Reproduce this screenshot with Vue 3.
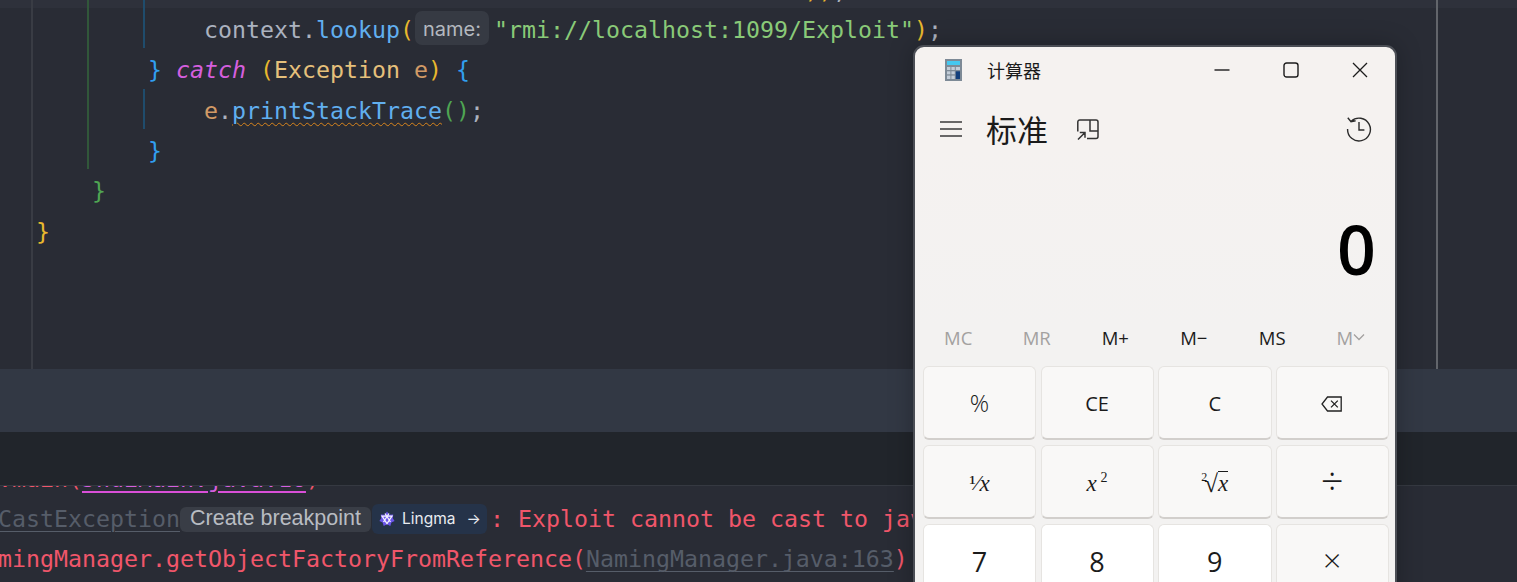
<script setup>
const memory = [
  { label: 'MC', off: true },
  { label: 'MR', off: true },
  { label: 'M+', off: false },
  { label: 'M−', off: false },
  { label: 'MS', off: false },
]
</script>

<template>
  <div class="page">
    <section class="editor">
      <i class="guide g-root"></i>
      <i class="guide g-green"></i>
      <i class="guide g-blue-a"></i>
      <i class="guide g-blue-b"></i>
      <i class="guide g-margin"></i>

      <div class="strip"><div class="strip-line"><span class="yellow">))</span><span class="plain">;</span></div></div>

      <div class="line lv3"><span class="plain">context.</span><span class="fn">lookup</span><span class="yellow">(</span><span class="hint">name:</span><span class="str">"rmi://localhost:1099/Exploit"</span><span class="yellow">)</span><span class="plain">;</span></div>
      <div class="line lv2"><span class="blue">}</span> <span class="kw">catch</span> <span class="yellow">(</span><span class="type">Exception</span> <span class="param">e</span><span class="yellow">)</span> <span class="blue">{</span></div>
      <div class="line lv3"><span class="param">e</span><span class="plain">.</span><span class="fn warn">printStackTrace</span><span class="green">()</span><span class="plain">;</span></div>
      <div class="line lv2"><span class="blue">}</span></div>
      <div class="line lv1"><span class="green">}</span></div>
      <div class="line lv0"><span class="yellow">}</span></div>
    </section>

    <div class="band"></div>
    <div class="toolbar"></div>

    <section class="console">
      <div class="cline clipped"><span>.main(</span><span class="hot">JndiMain.java:16</span><span>)</span></div>
      <div class="cline"><span class="link">CastException</span><span class="chip">Create breakpoint</span><span class="lingma"><svg class="lingma-logo" viewBox="0 0 16 16" width="16" height="16"><path d="M8 .5l2.2 3.2 4-.3-.4 3.9L15.6 10l-3.2 1.4L11.3 15 8 13.2 4.7 15l-1.100-3.600L.4 10l1.800-2.700-.4-3.900 4 .3z" fill="#6a55ea"/><path d="M3 5h10L8 12.500zM6 2.500l5.500 8.500M10 2.500 4.500 11" fill="none" stroke="#f4f2ff" stroke-width="1.250"/></svg><span class="lingma-name">Lingma</span><span class="lingma-arrow">→</span></span><span class="after">: Exploit cannot be cast to java.lang.Runnable</span></div>
      <div class="cline"><span>mingManager.getObjectFactoryFromReference(</span><span class="link">NamingManager.java:163</span><span>)</span></div>
    </section>

    <aside class="calc">
      <header class="titlebar">
        <svg class="app-icon" viewBox="0 0 18 22" width="18" height="22">
          <rect width="17" height="22" fill="#7d8a96"/>
          <rect x="2" y="2" width="13" height="4" fill="#45c8f0"/>
          <g fill="#c3cdd8">
            <rect x="2" y="8" width="3.4" height="3"/><rect x="6.4" y="8" width="3.4" height="3"/><rect x="10.8" y="8" width="4.2" height="3"/>
            <rect x="2" y="12.3" width="3.4" height="3"/><rect x="6.4" y="12.3" width="3.4" height="3"/>
            <rect x="2" y="16.6" width="3.4" height="3.4"/><rect x="6.4" y="16.6" width="3.4" height="3.4"/>
          </g>
          <rect x="10.8" y="12.3" width="4.2" height="7.7" fill="#123f7c"/>
        </svg>
        <span class="app-name">计算器</span>
        <div class="controls">
          <span class="ctl"><svg viewBox="0 0 16 16" width="16" height="16"><path d="M0.5 8h15" stroke="#1c1c1c" stroke-width="1.4"/></svg></span>
          <span class="ctl"><svg viewBox="0 0 16 16" width="16" height="16"><rect x="1" y="1" width="14" height="14" rx="2.6" fill="none" stroke="#1c1c1c" stroke-width="1.4"/></svg></span>
          <span class="ctl"><svg viewBox="0 0 16 16" width="16" height="16"><path d="M1 1l14 14M15 1 1 15" stroke="#1c1c1c" stroke-width="1.3"/></svg></span>
        </div>
      </header>

      <div class="modebar">
        <svg class="ham" viewBox="0 0 22 16" width="22" height="16"><path d="M0 1h22M0 8h22M0 15h22" stroke="#3a3a3a" stroke-width="1.5"/></svg>
        <span class="mode">标准</span>
        <svg class="keep" viewBox="0 0 22 22" width="22" height="22"><path d="M0.8 12.500V3a2 2 0 0 1 2-2h16.200a2 2 0 0 1 2 2v14.500a2 2 0 0 1-2 2H10M13 1v11h8M1 20.500l7-7M2.800 13.500H8v5.200" fill="none" stroke="#333" stroke-width="1.500"/></svg>
        <svg class="history" viewBox="0 0 26 26" width="26" height="26"><path d="M5.2 5.2A11.4 11.4 0 1 1 1.6 13M1.8 1.8 5 5.8l4.6-1M13 6v8h5.4" fill="none" stroke="#2b2b2b" stroke-width="1.4"/></svg>
      </div>

      <div class="display">0</div>

      <div class="memory">
        <span v-for="m in memory" :key="m.label" class="mem" :class="{ off: m.off }">{{ m.label }}</span>
        <span class="mem off">M<svg viewBox="0 0 12 8" width="12" height="8"><path d="M1 1.500 6 6.500l5-5" fill="none" stroke="#a3a1a0" stroke-width="1.300"/></svg></span>
      </div>

      <div class="keys">
        <button class="key big">%</button>
        <button class="key">CE</button>
        <button class="key">C</button>
        <button class="key"><svg viewBox="0 0 22 16" width="22" height="16"><path d="M6.5 1H20.2V15H6.5L1 8zM10 4.600l6.800 6.800M16.800 4.600 10 11.400" fill="none" stroke="#222" stroke-width="1.300"/></svg></button>

        <button class="key math"><span class="frac">¹⁄</span><i>x</i></button>
        <button class="key math"><i>x</i><sup class="sq">2</sup></button>
        <button class="key math"><sup class="root">2</sup><span class="radical">√</span><i class="over">x</i></button>
        <button class="key op div">÷</button>

        <button class="key digit">7</button>
        <button class="key digit">8</button>
        <button class="key digit">9</button>
        <button class="key op">×</button>
      </div>
    </aside>
  </div>
</template>

<style scoped>
.page {
  position: relative;
  width: 1517px;
  height: 582px;
  overflow: hidden;
  display: flex;
  flex-direction: column;
  background: #292c35;
  font-family: "DejaVu Sans Mono", "Liberation Mono", monospace;
  font-size: 23.25px;
}

.editor {
  position: relative;
  height: 369px;
  flex: none;
  overflow: hidden;
}
.strip {
  height: 8px;
  overflow: hidden;
  background: #2e313b;
}
.strip-line {
  margin-top: -29px;
  padding-left: 805px;
  line-height: 40.33px;
}
.line {
  box-sizing: border-box;
  height: 40.33px;
  padding-top: 2px;
  line-height: 40.33px;
  white-space: pre;
}
.lv0 { padding-left: 36px; }
.lv1 { padding-left: 92px; }
.lv2 { padding-left: 148px; }
.lv3 { padding-left: 204px; }

.guide {
  position: absolute;
  width: 2px;
  top: 0;
}
.g-root { left: 31px; height: 369px; background: #393c44; }
.g-green { left: 87px; height: 169px; background: #31573a; }
.g-blue-a { left: 143px; height: 48px; background: #1f4c6c; }
.g-blue-b { left: 143px; top: 89px; height: 40px; background: #1f4c6c; }
.g-margin { left: 1436px; height: 369px; background: #62656b; }

.plain { color: #abb2bf; }
.fn { color: #61afef; }
.yellow { color: #e8b82e; }
.blue { color: #319ff0; }
.green { color: #4fa553; }
.kw { color: #d55fde; font-style: italic; }
.type { color: #e5c07b; }
.param { color: #d19a66; }
.str { color: #89ca78; }
.warn {
  text-decoration: underline wavy #d9851c 1.1px;
  text-underline-offset: 3px;
}
.hint {
  display: inline-block;
  width: 74px;
  height: 34px;
  margin: 1px 5px 0 1px;
  vertical-align: top;
  border-radius: 7px;
  background: #363a43;
  color: #b4b8bf;
  font-family: "Inter", "Liberation Sans", sans-serif;
  font-size: 20px;
  line-height: 36px;
  text-align: center;
}

.band { height: 63px; flex: none; background: #323844; }
.toolbar { height: 53px; flex: none; background: #21252b; border-bottom: 1px solid #353941; }

.console {
  flex: 1;
  overflow: hidden;
  color: #f0566a;
  margin-left: -2px;
}
.cline {
  display: flex;
  align-items: center;
  height: 40.33px;
  line-height: 40.33px;
  white-space: pre;
}
.clipped { margin-top: -27.3px; }
.hot {
  color: #d55fde;
  text-decoration: underline;
  text-decoration-color: #d94fd8;
  text-underline-offset: 4px;
}
.link {
  color: #565d69;
  text-decoration: underline;
  text-decoration-thickness: 1px;
  text-underline-offset: 4px;
}
.chip {
  width: 191px;
  height: 25px;
  line-height: 22px;
  border-radius: 6px;
  background: #393d46;
  color: #b8bcc2;
  font-family: "Liberation Sans", Arial, sans-serif;
  font-size: 21.5px;
  text-align: center;
}
.lingma {
  display: flex;
  align-items: center;
  width: 115px;
  height: 30px;
  margin-left: 1px;
  margin-right: 3px;
  padding-left: 7px;
  box-sizing: border-box;
  border-radius: 6px;
  background: #253349;
  color: #e8ebf0;
  font-family: "Inter", "Liberation Sans", sans-serif;
  font-size: 15.5px;
}
.lingma-logo { flex: none; }
.lingma-name { margin-left: 7px; }
.lingma-arrow { margin-left: 11px; font-size: 15px; }

.calc {
  position: absolute;
  left: 913px;
  top: 45px;
  width: 484px;
  height: 560px;
  box-sizing: border-box;
  border: 2px solid #4b4e55;
  border-radius: 11px;
  background: linear-gradient(#f5f2f0 0, #f5f2f0 100px, #f3f2f1 280px);
  box-shadow: 0 0 24px rgba(0, 0, 0, 0.25);
  color: #1b1b1b;
  font-family: "Open Sans", "Noto Sans CJK SC", sans-serif;
  display: flex;
  flex-direction: column;
}
.titlebar {
  display: flex;
  align-items: center;
  height: 46px;
  padding-left: 30px;
  flex: none;
}
.app-icon { flex: none; }
.app-name {
  margin-left: 24px;
  font-family: "Noto Sans CJK SC", sans-serif;
  font-size: 18px;
}
.controls {
  display: flex;
  margin-left: auto;
  padding-right: 1px;
}
.ctl {
  display: flex;
  align-items: center;
  justify-content: center;
  width: 69px;
  height: 30px;
  margin-top: -1px;
}
.modebar {
  display: flex;
  align-items: center;
  height: 72px;
  padding: 0 23px 0 25px;
  flex: none;
}
.ham { flex: none; }
.mode {
  margin-left: 24px;
  margin-top: -2px;
  font-family: "Noto Sans CJK SC", sans-serif;
  font-size: 31px;
}
.keep { margin-left: 29px; margin-top: 1px; }
.history { margin-left: auto; }
.display {
  flex: none;
  height: 155px;
  box-sizing: border-box;
  padding: 11px 19px 0 0;
  display: flex;
  align-items: center;
  justify-content: flex-end;
  color: #000;
  font-size: 68px;
  font-weight: 600;
}
.memory {
  display: flex;
  height: 36px;
  padding: 0 5px 2px 4px;
  box-sizing: border-box;
  flex: none;
}
.mem {
  flex: 1;
  display: flex;
  align-items: center;
  justify-content: center;
  font-size: 18.5px;
}
.mem.off { color: #a3a1a0; }
.keys {
  flex: 1;
  display: grid;
  grid-template-columns: 113px 113px 113.5px 112.5px;
  grid-auto-rows: 74px;
  gap: 5px 4.5px;
  padding: 10px 6px 0 8px;
}
.key {
  display: flex;
  align-items: center;
  justify-content: center;
  padding: 2px 0 0;
  box-sizing: border-box;
  border: 1.5px solid #e6e4e1;
  border-bottom: 2px solid #d2cfcc;
  border-radius: 6px;
  background: #f9f8f7;
  color: #1b1b1b;
  font-family: inherit;
  font-size: 20px;
  line-height: 1;
}
.big { font-size: 24px; font-weight: 300; padding-top: 1px; }
.digit {
  background: #fff;
  padding-top: 1px;
  font-size: 27px;
}
.op {
  padding: 0 0 1px;
  font-size: 32px;
  font-weight: 300;
}
.div { font-size: 40px; }
.math {
  padding-top: 3px;
  font-family: "Liberation Serif", serif;
  font-size: 23px;
}
.frac { font-size: 22px; }
.sq { margin-left: 4px; margin-top: -10px; font-size: 14px; }
.root { font-size: 12px; margin-top: -12px; margin-right: -3px; }
.radical { font-size: 25px; }
.over { border-top: 1px solid #1b1b1b; line-height: 1; }
</style>

<style>
html, body { margin: 0; background: #292c35; overflow: hidden; }
</style>
